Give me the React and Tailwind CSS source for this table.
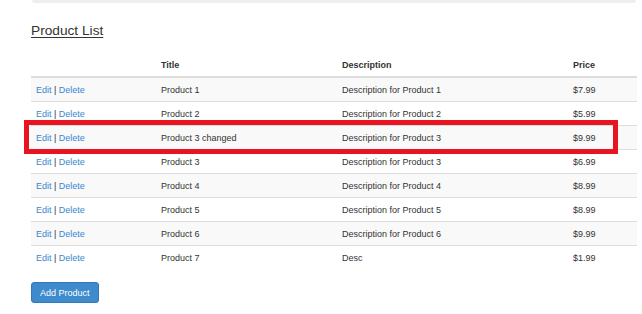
import React from "react";

const products = [
  { title: "Product 1", desc: "Description for Product 1", price: "$7.99" },
  { title: "Product 2", desc: "Description for Product 2", price: "$5.99" },
  { title: "Product 3 changed", desc: "Description for Product 3", price: "$9.99", highlight: true },
  { title: "Product 3", desc: "Description for Product 3", price: "$6.99" },
  { title: "Product 4", desc: "Description for Product 4", price: "$8.99" },
  { title: "Product 5", desc: "Description for Product 5", price: "$8.99" },
  { title: "Product 6", desc: "Description for Product 6", price: "$9.99" },
  { title: "Product 7", desc: "Desc", price: "$1.99" },
];

const cols = "grid grid-cols-[125px_181px_231px_69px]";

export default function App() {
  return (
    <div
      className="w-[642px] h-[314px] bg-white text-[#333] overflow-hidden"
      style={{ fontFamily: '"Liberation Sans", Arial, sans-serif' }}
    >
      <div className="pl-[31px] w-[637px]">
        <div className="ml-[1px] w-[604px] h-[3px] bg-[#eeeeee] rounded-b-[3px]" />

        <h2 className="mt-[20px] text-[13.7px] leading-[16px] underline underline-offset-[2px]">
          Product List
        </h2>

        <div className="mt-[15px] text-[9px] leading-[12px]">
          <div className={`${cols} h-[24px] items-center border-b-2 border-[#dddddd] font-bold`}>
            <div className="px-[5px]" />
            <div className="px-[5px]">Title</div>
            <div className="px-[5px]">Description</div>
            <div className="px-[5px]">Price</div>
          </div>

          {products.map((p, i) => (
            <div
              key={i}
              className={`relative ${cols} items-center ${i === 0 ? "h-[23px]" : "h-[24px] border-t border-[#dddddd]"} ${i % 2 === 0 ? "bg-[#f9f9f9]" : "bg-white"}`}
            >
              <div className="px-[5px]">
                <span className="text-[#3a87cc]">Edit</span> | <span className="text-[#3a87cc]">Delete</span>
              </div>
              <div className="px-[5px]">{p.title}</div>
              <div className="px-[5px]">{p.desc}</div>
              <div className="px-[5px]">{p.price}</div>
              {p.highlight && (
                <div className="absolute z-10 left-[-7px] right-[19px] top-[-6px] bottom-[-5px] border-[5px] border-[#e8141f] pointer-events-none" />
              )}
            </div>
          ))}
        </div>

        <button className="mt-[13px] h-[21px] px-[8px] bg-[#3d8bcd] border border-[#3479b5] rounded-[3px] text-white text-[9px] leading-[12px]">
          Add Product
        </button>
      </div>
    </div>
  );
}
